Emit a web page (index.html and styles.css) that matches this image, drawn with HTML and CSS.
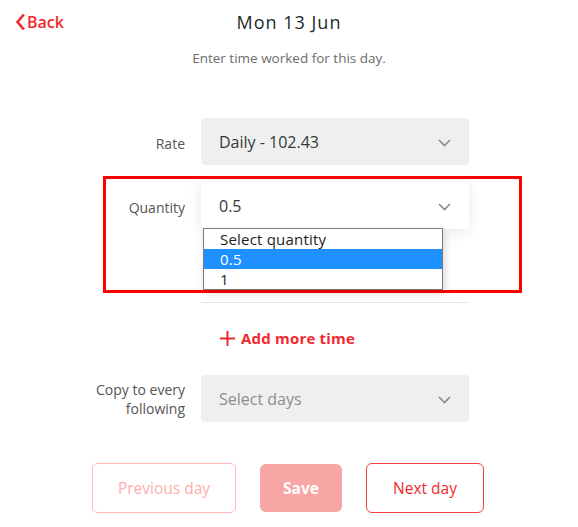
FILE: index.html
```html
<!DOCTYPE html>
<html lang="en">
<head>
<meta charset="utf-8">
<title>Mon 13 Jun</title>
<link rel="stylesheet" href="styles.css">
</head>
<body>
<div class="page">
  <header class="header">
    <a class="back" href="#">
      <svg class="back-icon" width="10" height="16" viewBox="0 0 10 16"><path d="M8 1.5 L2.5 8 L8 14.5" fill="none" stroke="currentColor" stroke-width="2.6" stroke-linecap="square" stroke-linejoin="miter"/></svg>
      <span>Back</span>
    </a>
    <h1 class="title">Mon 13 Jun</h1>
    <span></span>
  </header>
  <p class="subtitle">Enter time worked for this day.</p>

  <div class="row row-rate">
    <div class="label">Rate</div>
    <div class="select">
      <span>Daily - 102.43</span>
      <svg class="chev" width="13" height="8" viewBox="0 0 13 8"><path d="M1 1 L6.5 6.5 L12 1" fill="none" stroke="currentColor" stroke-width="1.6"/></svg>
    </div>
  </div>

  <div class="row row-qty">
    <div class="label">Quantity</div>
    <div class="select select-open">
      <span>0.5</span>
      <svg class="chev" width="13" height="8" viewBox="0 0 13 8"><path d="M1 1 L6.5 6.5 L12 1" fill="none" stroke="currentColor" stroke-width="1.6"/></svg>
      <ul class="listbox">
        <li class="option">Select quantity</li>
        <li class="option option-active">0.5</li>
        <li class="option">1</li>
      </ul>
    </div>
  </div>

  <div class="separator"></div>

  <a class="add-more" href="#">
    <svg class="plus" width="15" height="15" viewBox="0 0 15 15"><path d="M7.5 0 V15 M0 7.5 H15" fill="none" stroke="currentColor" stroke-width="2"/></svg>
    <span>Add more time</span>
  </a>

  <div class="row row-copy">
    <div class="label">Copy to every following</div>
    <div class="select select-placeholder">
      <span>Select days</span>
      <svg class="chev" width="13" height="8" viewBox="0 0 13 8"><path d="M1 1 L6.5 6.5 L12 1" fill="none" stroke="currentColor" stroke-width="1.6"/></svg>
    </div>
  </div>

  <div class="actions">
    <button class="btn btn-prev">Previous day</button>
    <button class="btn btn-save">Save</button>
    <button class="btn btn-next">Next day</button>
  </div>

  <div class="highlight"></div>
</div>
</body>
</html>
```

FILE: styles.css
```css
* { box-sizing: border-box; }

html, body {
  margin: 0;
  padding: 0;
  background: #ffffff;
}

body {
  font-family: "Open Sans", "Noto Sans", Arial, sans-serif;
  color: #333333;
}

.page {
  position: relative;
  width: 578px;
  min-height: 527px;
}

.header {
  display: grid;
  grid-template-columns: 1fr auto 1fr;
  align-items: center;
  height: 44px;
  padding: 0 15px;
}

.back {
  display: flex;
  align-items: center;
  gap: 2px;
  color: #ee2a2d;
  text-decoration: none;
  font-size: 16px;
  font-weight: 600;
  line-height: 20px;
}

.back-icon { display: block; }

.title {
  margin: 0;
  font-size: 18px;
  font-weight: 400;
  color: #222b2b;
  letter-spacing: 1px;
  line-height: 24px;
}

.subtitle {
  margin: 5px 0 0;
  text-align: center;
  font-size: 13.5px;
  line-height: 18px;
  color: #6d6d6d;
}

.row {
  display: flex;
  align-items: center;
  column-gap: 16px;
  margin-left: 65px;
}

.row-rate { margin-top: 51px; }
.row-qty { margin-top: 17px; }
.row-copy { margin-top: 27px; }

.label {
  width: 120px;
  margin-top: 3px;
  text-align: right;
  font-size: 14px;
  line-height: 19px;
  color: #555555;
}

.row-copy .label { margin-top: 0; }

.select {
  position: relative;
  width: 268px;
  height: 47px;
  border-radius: 4px;
  background: #efefef;
  display: flex;
  align-items: center;
  justify-content: space-between;
  padding: 0 18px;
  font-size: 16px;
  color: #333a3a;
}

.select-open {
  background: #ffffff;
  box-shadow: 0 2px 14px rgba(0, 0, 0, 0.10);
}

.select-placeholder { color: #8a8e8e; }

.chev {
  display: block;
  color: #8a8a8a;
  margin-top: 2px;
}

.listbox {
  position: absolute;
  left: 2px;
  top: 46px;
  width: 240px;
  margin: 0;
  padding: 0;
  list-style: none;
  background: #ffffff;
  border: 1px solid #7a7a7a;
  box-shadow: 2px 3px 8px rgba(0, 0, 0, 0.15);
  z-index: 2;
}

.option {
  height: 20px;
  line-height: 20px;
  padding-left: 16px;
  font-size: 15px;
  letter-spacing: 0.2px;
  color: #1e1e1e;
}

.option-active {
  background: #1e90ff;
  color: #ffffff;
}

.separator {
  margin: 73px 0 0 201px;
  width: 268px;
  border-top: 1px solid #e3e3e3;
}

.add-more {
  display: flex;
  align-items: center;
  gap: 6px;
  margin: 25px 0 0 220px;
  width: max-content;
  color: #ef2a2e;
  text-decoration: none;
  font-size: 15px;
  font-weight: 700;
  letter-spacing: 0.2px;
  line-height: 20px;
}

.plus { display: block; }

.actions {
  display: flex;
  justify-content: center;
  align-items: center;
  gap: 24px;
  margin-top: 41px;
  padding-right: 2px;
}

.btn {
  font-family: "Open Sans", "Noto Sans", Arial, sans-serif;
  font-size: 15.5px;
  height: 50px;
  border-radius: 6px;
  background: #ffffff;
  cursor: pointer;
  padding: 0;
}

.btn-prev {
  width: 144px;
  border: 1px solid #ffb8b8;
  color: #ffadad;
}

.btn-save {
  width: 82px;
  height: 48px;
  border: none;
  background: #f8a5a5;
  color: #ffffff;
  font-weight: 700;
}

.btn-next {
  width: 118px;
  border: 1px solid #f04242;
  color: #ee2a2d;
}

.highlight {
  position: absolute;
  left: 103px;
  top: 176px;
  width: 419px;
  height: 117px;
  border: 3px solid #ff0000;
  pointer-events: none;
}
```
